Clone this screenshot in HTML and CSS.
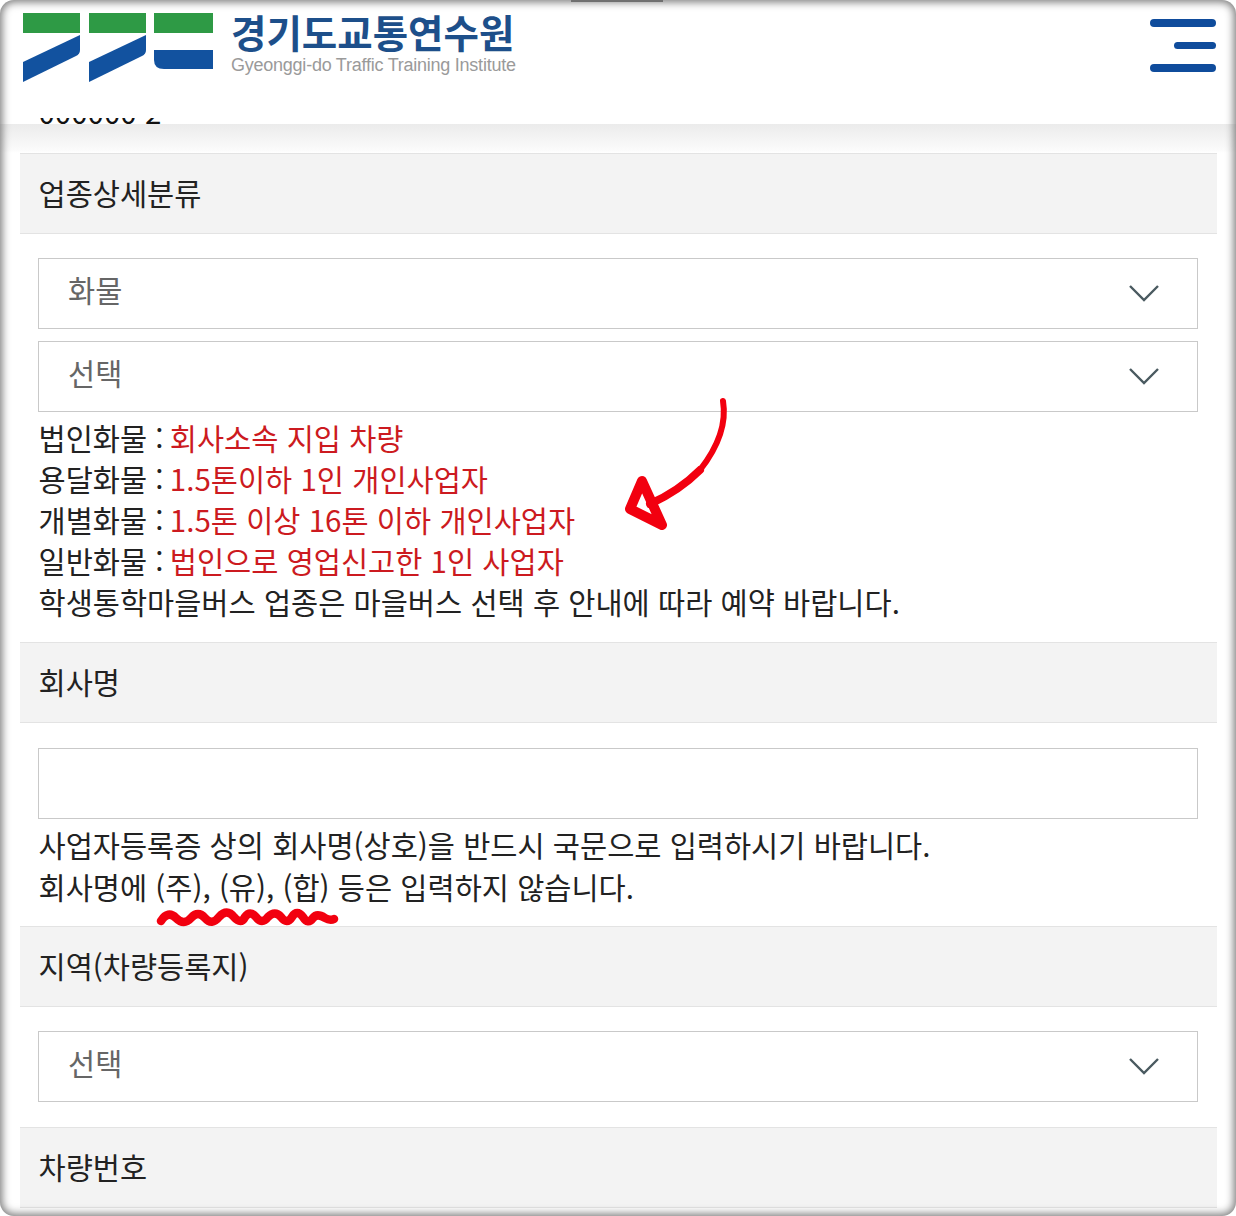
FILE: index.html
```html
<!DOCTYPE html>
<html lang="ko">
<head>
    <meta charset="UTF-8">
    <title>경기도교통연수원</title>
    <link rel="stylesheet" href="styles.css">
</head>
<body>
<div class="screen">
    <header class="top">
        <a class="logo">
            <svg class="logo-mark" width="192" height="70" viewBox="23 13 192 70">
                <g fill="#2e9a45">
                    <rect x="23" y="13" width="57" height="20"/>
                    <rect x="89" y="13" width="57" height="20"/>
                    <rect x="154" y="13" width="59" height="20"/>
                </g>
                <g fill="#12529f">
                    <path d="M80 35V50Q80 54 76 56L23 82V62Z"/>
                    <path d="M146 35V50Q146 54 142 56L89 82V62Z"/>
                    <path d="M154 50H213V69H164Q154 69 154 60Z"/>
                </g>
            </svg>
            <div class="logo-text">
                <strong>경기도교통연수원</strong>
                <span>Gyeonggi-do Traffic Training Institute</span>
            </div>
        </a>
        <div class="menu">
            <i></i>
            <i class="short"></i>
            <i></i>
        </div>
    </header>

    <div class="cut"><span>000000 2</span></div>

    <h3 class="title">업종상세분류</h3>
    <div class="body">
        <div class="field select"><span>화물</span><svg class="chev" width="30" height="18" viewBox="0 0 30 18"><path d="M1 2L15 16L29 2"/></svg></div>
        <div class="field select next"><span>선택</span><svg class="chev" width="30" height="18" viewBox="0 0 30 18"><path d="M1 2L15 16L29 2"/></svg></div>
        <ul class="notes">
            <li>법인화물 : <em>회사소속 지입 차량</em></li>
            <li>용달화물 : <em>1.5톤이하 1인 개인사업자</em></li>
            <li>개별화물 : <em>1.5톤 이상 16톤 이하 개인사업자</em></li>
            <li>일반화물 : <em>법인으로 영업신고한 1인 사업자</em></li>
            <li>학생통학마을버스 업종은 마을버스 선택 후 안내에 따라 예약 바랍니다.</li>
        </ul>
    </div>

    <h3 class="title">회사명</h3>
    <div class="body name">
        <div class="field"></div>
        <ul class="notes">
            <li>사업자등록증 상의 회사명(상호)을 반드시 국문으로 입력하시기 바랍니다.</li>
            <li>회사명에 (주), (유), (합) 등은 입력하지 않습니다.</li>
        </ul>
    </div>

    <h3 class="title">지역(차량등록지)</h3>
    <div class="body area">
        <div class="field select"><span>선택</span><svg class="chev" width="30" height="18" viewBox="0 0 30 18"><path d="M1 2L15 16L29 2"/></svg></div>
    </div>

    <h3 class="title">차량번호</h3>

    <!-- 손으로 그린 표시 -->
    <svg class="mark arrow" width="120" height="140" viewBox="620 396 120 140">
        <path class="pen" stroke-width="6" d="M723 401C727 425 718 447 700 470"/>
        <path class="pen" stroke-width="8" d="M700 470C685 485 670 495 650 504"/>
        <path class="pen" stroke-width="10" d="M642 481L630 509L662 525Z"/>
    </svg>
    <svg class="mark wave" width="190" height="30" viewBox="152 903 190 30">
        <path class="pen" stroke-width="8.5" d="M161 921Q168 910 176 918Q184 926 191 918Q198 910 205 918Q212 926 219 917Q227 908 234 917Q241 925 245 917Q250 910 256 917Q262 925 268 917Q275 910 281 917Q287 925 292 917Q297 909 303 917Q308 925 313 918Q317 913 325 918Q330 921 334 919"/>
    </svg>

    <div class="tab"></div>
    <div class="frame"></div>
</div>
</body>
</html>
```

FILE: styles.css
```css
*{ margin: 0; padding: 0; box-sizing: border-box;}
html,body{ background: #fff;}
body{ font-family: "Noto Sans CJK KR", "Noto Sans", sans-serif; color: #222;}
ul{ list-style: none;}
em{ font-style: normal; color: #cc1a20; margin-left: -2px;}

.screen{ width: 1236px; height: 1216px; position: relative; overflow: hidden; background: #fff;}

.top{ height: 118px; padding: 13px 20px 0 23px; display: flex; justify-content: space-between; align-items: flex-start; background: #fff;}
.logo{ display: flex; gap: 16px;}
.logo-mark{ display: block; flex: none;}
.logo-text{ display: flex; flex-direction: column; margin-top: -4px;}
.logo-text strong{ font-size: 38.5px; line-height: 44px; font-weight: 700; color: #1d4f8a;}
.logo-text span{ margin-top: 2px; font: 18px/20px "Liberation Sans", sans-serif; color: #9a9a9a; letter-spacing: -.24px;}

.menu{ width: 66px; margin-top: 6px; display: flex; flex-direction: column; align-items: flex-end; gap: 15px;}
.menu i{ display: block; width: 100%; height: 8px; border-radius: 4px; background: #0f4c9c;}
.menu i.short{ width: 42px; height: 7px;}

.cut{ height: 35px; padding-left: 38.5px; overflow: hidden; background: linear-gradient(#fff 6px, #ebebeb 6px, #fbfbfb 32px, #fff);}
.cut span{ display: block; margin-top: -27px; font-size: 29.5px; line-height: 41px; color: #111;}

.title{ height: 81px; margin: 0 19px 0 20px; padding-left: 18.5px; font-size: 29.5px; line-height: 77px; font-weight: 400; color: #222; background: #f3f3f3; border-top: 1px solid #e3e3e3; border-bottom: 1px solid #e3e3e3;}
.body{ padding: 24px 38px 20px 38.5px;}
.body.name{ padding-top: 25px; padding-bottom: 19px;}
.body.area{ padding-bottom: 25px;}

.field{ height: 71px; margin-left: -.5px; padding-left: 29px; display: flex; justify-content: space-between; align-items: center; font-size: 29.5px; color: #666; background: #fff; border: 1px solid #c9c9c9;}
.field span{ padding-bottom: 10px;}
.next{ margin-top: 12px;}
.chev{ margin-right: 38px; margin-top: -2px;}
.chev path{ fill: none; stroke: #4a5a60; stroke-width: 2.4;}

.notes{ margin-top: 5px; font-size: 29.5px; line-height: 41px; white-space: nowrap;}
.name .notes{ margin-top: 4px; line-height: 42px;}

.mark{ position: absolute; display: block; pointer-events: none;}
.arrow{ left: 620px; top: 396px;}
.wave{ left: 152px; top: 903px;}
.pen{ fill: none; stroke: #f2000f; stroke-linecap: round; stroke-linejoin: round;}

.tab{ position: absolute; left: 571px; top: 0; width: 92px; height: 2px; background: #666;}
.frame{ position: absolute; left: 0; top: 0; right: 0; bottom: 0; border-radius: 14px; pointer-events: none; box-shadow: 0 0 0 12px #fff, inset 0 0 9px 2px #777;}
```
